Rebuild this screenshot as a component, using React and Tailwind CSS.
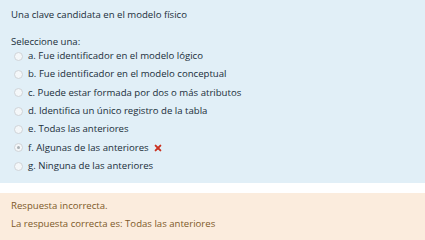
const options = [
  'a. Fue identificador en el modelo lógico',
  'b. Fue identificador en el modelo conceptual',
  'c. Puede estar formada por dos o más atributos',
  'd. Identifica un único registro de la tabla',
  'e. Todas las anteriores',
  'f. Algunas de las anteriores',
  'g. Ninguna de las anteriores',
];

function Radio({ checked }) {
  return (
    <span className="relative flex h-[9px] w-[9px] shrink-0 items-center justify-center rounded-full border border-[#cfd4d8] bg-[#f4f7f9]">
      {checked && <span className="h-[3px] w-[3px] rounded-full bg-[#a9b0b5]" />}
    </span>
  );
}

export default function App() {
  return (
    <div className="h-[240px] w-[425px] overflow-hidden bg-white font-['Open_Sans','Liberation_Sans',sans-serif] text-[9.6px]">
      <div className="h-[183px] bg-[#e1eff7] px-[11px] pt-[6px] text-[#1a2e3a]">
        <p className="leading-[18px]">Una clave candidata en el modelo físico</p>
        <p className="mt-[11px] leading-[14px]">Seleccione una:</p>
        <div className="-mt-[2px] flex flex-col">
          {options.map((opt, i) => (
            <div key={opt} className="flex h-[18.33px] items-center pl-[3px]">
              <Radio checked={i === 5} />
              <span className="ml-[5px]">{opt}</span>
              {i === 5 && (
                <svg viewBox="0 0 10 10" className="ml-[5px] h-[8px] w-[8px]">
                  <path d="M2 2 L8 8 M8 2 L2 8" stroke="#ca3120" strokeWidth="2.4" strokeLinecap="round" />
                </svg>
              )}
            </div>
          ))}
        </div>
      </div>
      <div className="mt-[10px] h-[47px] bg-[#fbecdd] px-[11px] pt-[4px] text-[#7d5a29]">
        <p className="leading-[18px]">Respuesta incorrecta.</p>
        <p className="leading-[18px]">La respuesta correcta es: Todas las anteriores</p>
      </div>
    </div>
  );
}
